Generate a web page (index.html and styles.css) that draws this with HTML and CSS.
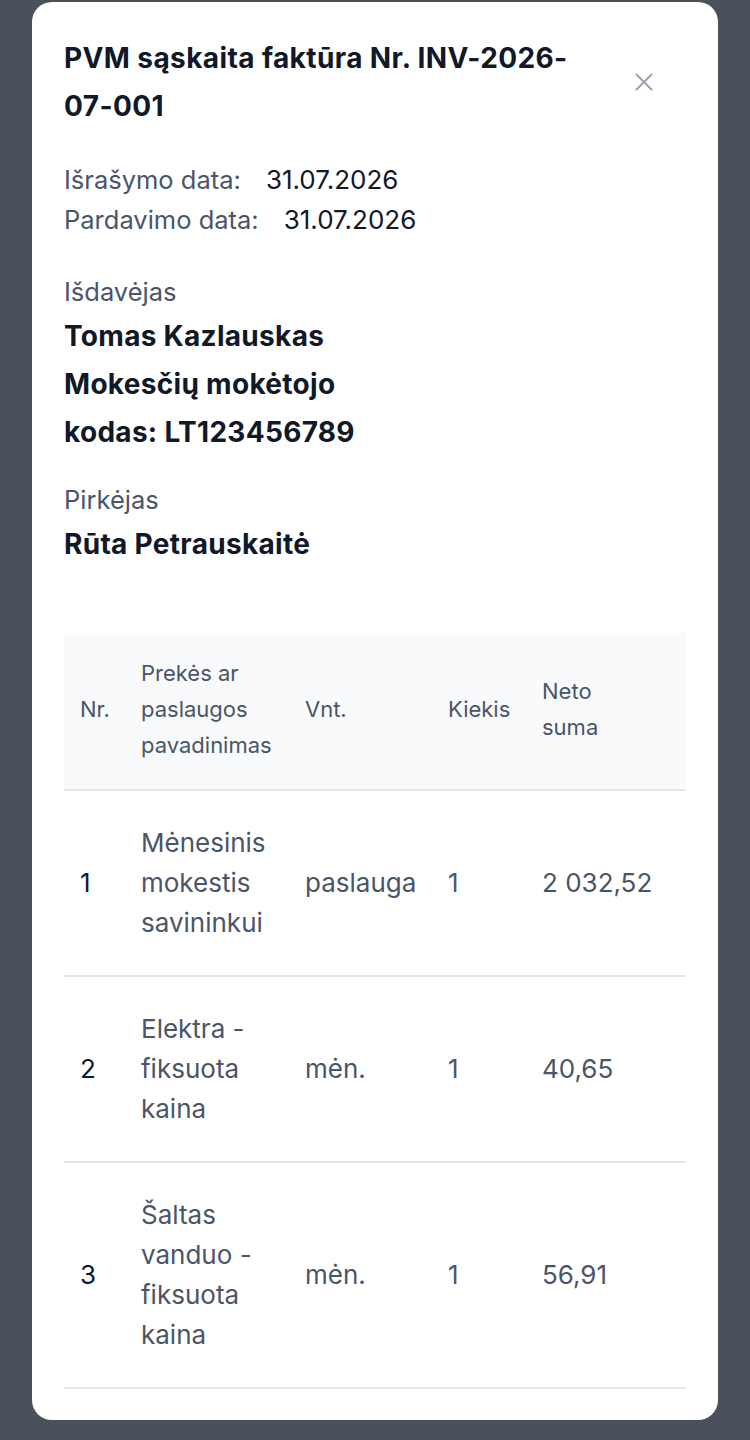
FILE: index.html
```html
<!DOCTYPE html>
<html lang="lt">
<head>
<meta charset="utf-8">
<title>PVM sąskaita faktūra</title>
<link rel="stylesheet" href="styles.css">
</head>
<body>
<div class="modal">
  <div class="modal-header">
    <h1 class="title">PVM sąskaita faktūra Nr. INV-2026-07-001</h1>
    <button class="close" aria-label="Uždaryti">
      <svg width="18" height="18" viewBox="0 0 18 18"><path d="M1.5 1.5 L16.5 16.5 M16.5 1.5 L1.5 16.5" stroke="#9ca3af" stroke-width="2" stroke-linecap="round" fill="none"/></svg>
    </button>
  </div>

  <div class="dates">
    <div class="date-row"><span class="label">Išrašymo data:</span><span class="value">31.07.2026</span></div>
    <div class="date-row"><span class="label">Pardavimo data:</span><span class="value">31.07.2026</span></div>
  </div>

  <div class="party">
    <div class="label">Išdavėjas</div>
    <div class="party-name">Tomas Kazlauskas</div>
    <div class="party-name">Mokesčių mokėtojo kodas: LT123456789</div>
  </div>

  <div class="party">
    <div class="label">Pirkėjas</div>
    <div class="party-name">Rūta Petrauskaitė</div>
  </div>

  <table class="items">
    <colgroup>
      <col class="c-nr"><col class="c-name"><col class="c-unit"><col class="c-qty"><col class="c-sum">
    </colgroup>
    <thead>
      <tr>
        <th>Nr.</th>
        <th>Prekės ar paslaugos pavadinimas</th>
        <th>Vnt.</th>
        <th>Kiekis</th>
        <th><span class="stack">Neto suma</span></th>
      </tr>
    </thead>
    <tbody>
      <tr>
        <td class="nr">1</td>
        <td>Mėnesinis mokestis savininkui</td>
        <td>paslauga</td>
        <td>1</td>
        <td>2 032,52</td>
      </tr>
      <tr>
        <td class="nr">2</td>
        <td>Elektra - fiksuota kaina</td>
        <td>mėn.</td>
        <td>1</td>
        <td>40,65</td>
      </tr>
      <tr>
        <td class="nr">3</td>
        <td>Šaltas vanduo - fiksuota kaina</td>
        <td>mėn.</td>
        <td>1</td>
        <td>56,91</td>
      </tr>
    </tbody>
  </table>
</div>
</body>
</html>
```

FILE: styles.css
```css
* { box-sizing: border-box; }

html, body {
  margin: 0;
  padding: 0;
}

body {
  background: #4b515b;
  font-family: "Inter", "Noto Sans", sans-serif;
  color: #111827;
  min-height: 1440px;
}

.modal {
  margin: 2px 32px 0;
  background: #ffffff;
  border-radius: 20px;
  padding: 32px 32px 31px;
}

.modal-header {
  display: flex;
  align-items: center;
  gap: 36px;
  padding-right: 20px;
}

.title {
  flex: 1;
  margin: 0;
  font-size: 28px;
  line-height: 48px;
  font-weight: 700;
  letter-spacing: 0.4px;
  color: #111827;
}

.close {
  width: 44px;
  height: 44px;
  border: 0;
  background: transparent;
  padding: 0;
  display: flex;
  align-items: center;
  justify-content: center;
}

.dates {
  margin-top: 30px;
}

.date-row {
  display: flex;
  gap: 25px;
  line-height: 40px;
}

.label {
  color: #4a5568;
  font-size: 25.5px;
  line-height: 40px;
}

.value {
  color: #111827;
  font-size: 26px;
}

.party {
  margin-top: 32px;
  max-width: 311px;
}

.party + .party {
  margin-top: 24px;
}

.party-name {
  font-size: 28px;
  line-height: 48px;
  font-weight: 700;
  letter-spacing: 0.3px;
  color: #111827;
}

.items {
  margin-top: 65px;
  width: 100%;
  border-collapse: collapse;
  table-layout: fixed;
}

.c-nr { width: 61px; }
.c-name { width: 164px; }
.c-unit { width: 143px; }
.c-qty { width: 94px; }
.c-sum { width: 160px; }

.items th {
  background: #f9fafb;
  font-weight: 400;
  font-size: 22px;
  line-height: 36px;
  color: #4a5568;
  text-align: left;
  padding: 22px 16px 26px;
  vertical-align: middle;
  border-bottom: 2px solid #e5e7eb;
}

.stack {
  display: inline-block;
  width: min-content;
}

.items td {
  font-size: 26px;
  line-height: 40px;
  color: #4a5568;
  padding: 32px 16px;
  vertical-align: middle;
  border-bottom: 2px solid #e5e7eb;
}

.items td.nr {
  color: #111827;
}
```
